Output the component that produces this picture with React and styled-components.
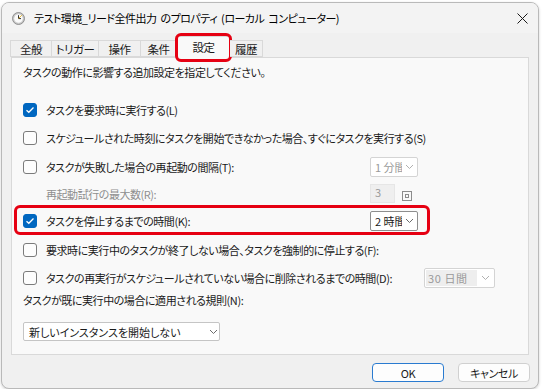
import React from "react";
import styled, { createGlobalStyle } from "styled-components";

const Global = createGlobalStyle`
  html, body {
    margin: 0;
    background: #ffffff;
  }
  body {
    font-family: "Noto Sans CJK JP", "Noto Sans", sans-serif;
    font-size: 11px;
    font-feature-settings: "palt";
    letter-spacing: -0.45px;
    color: #1a1a1a;
  }
`;

const Window = styled.div`
  box-sizing: border-box;
  width: 538px;
  height: 387px;
  margin: 2px 0 0 1px;
  border: 1px solid #b9b9b9;
  border-radius: 8px;
  background: #f0f0f0;
  box-shadow: 0 1px 3px rgba(0, 0, 0, 0.18);
  display: flex;
  flex-direction: column;
  overflow: hidden;
`;

const TitleBar = styled.div`
  height: 30px;
  flex-shrink: 0;
  display: flex;
  align-items: center;
  padding: 0 0 0 10px;
  background: #f3f3f3;
`;

const TitleText = styled.span`
  margin-left: 9px;
  flex: 1;
  font-size: 11px;
  letter-spacing: -0.5px;
  word-spacing: 2px;
  color: #000;
`;

const CloseButton = styled.div`
  width: 20px;
  display: flex;
  justify-content: center;
  margin-right: 6px;
`;

const TabStrip = styled.div`
  display: flex;
  align-items: flex-end;
  height: 24px;
  padding-left: 8px;
  position: relative;
  z-index: 1;
`;

const Tab = styled.div`
  position: relative;
  box-sizing: border-box;
  width: ${(p) => p.$w}px;
  height: ${(p) => (p.$active ? 22 : 17)}px;
  margin-bottom: ${(p) => (p.$active ? -1 : 0)}px;
  margin-left: ${(p) => (p.$active ? -2 : 0)}px;
  margin-right: ${(p) => (p.$active ? -2 : 0)}px;
  border: 1px solid #d9d9d9;
  border-bottom: ${(p) => (p.$active ? "none" : "1px solid #d9d9d9")};
  border-left: ${(p) => (p.$first || p.$active ? "1px solid #d9d9d9" : "none")};
  background: ${(p) => (p.$active ? "#f9f9f9" : "#f0f0f0")};
  display: flex;
  align-items: ${(p) => (p.$active ? "flex-start" : "center")};
  padding-top: ${(p) => (p.$active ? 3 : 0)}px;
  justify-content: center;
  font-size: 11.5px;
  color: #1a1a1a;
  line-height: 14px;
`;

const Mark = styled.div`
  position: absolute;
  left: -1px;
  top: -4px;
  right: -1px;
  bottom: -4px;
  border: 3px solid #e60012;
  border-radius: 6px;
  pointer-events: none;
`;

const Panel = styled.div`
  box-sizing: border-box;
  height: 298px;
  margin: 0 9px 0 9px;
  border: 1px solid #d9d9d9;
  background: #f9f9f9;
  padding: 6px 0 0 11px;
  display: flex;
  flex-direction: column;
`;

const Line = styled.div`
  line-height: 16px;
  margin-top: ${(p) => p.$mt || 0}px;
`;

const Row = styled.div`
  position: relative;
  display: flex;
  align-items: center;
  height: ${(p) => p.$h}px;
  padding-right: ${(p) => p.$pr || 0}px;
  margin-top: ${(p) => p.$mt || 0}px;
`;

const Label = styled.span`
  flex: 1;
  margin-left: ${(p) => (p.$indent ? 23 : 9)}px;
  color: ${(p) => (p.$muted ? "#8f8f8f" : "#1a1a1a")};
  white-space: nowrap;
`;

const Box = styled.span`
  box-sizing: border-box;
  width: 14px;
  height: 14px;
  border-radius: 3px;
  flex-shrink: 0;
  border: 1px solid ${(p) => (p.$on ? "#0067c0" : "#7b7b7b")};
  background: ${(p) => (p.$on ? "#0067c0" : "#fdfdfd")};
  display: flex;
  align-items: center;
  justify-content: center;
`;

const Slot = styled.div`
  display: flex;
  align-items: center;
  gap: 7px;
  width: ${(p) => p.$w}px;
  flex-shrink: 0;
`;

const Select = styled.div`
  box-sizing: border-box;
  width: ${(p) => p.$w}px;
  height: ${(p) => p.$h || 20}px;
  border: 1px solid ${(p) => (p.$disabled ? "#d4d4d4" : p.$strong ? "#8d8d8d" : "#c5c5c5")};
  border-radius: 2px;
  background: #ffffff;
  display: flex;
  align-items: center;
  padding: 1px 0 1px ${(p) => p.$pl || 2}px;
  color: ${(p) => (p.$disabled ? "#9a9a9a" : "#1a1a1a")};
`;

const SelectValue = styled.span`
  width: ${(p) => p.$w}px;
  height: 100%;
  overflow: hidden;
  white-space: nowrap;
  display: flex;
  align-items: center;
  padding-left: 2px;
  box-sizing: border-box;
  background: ${(p) => (p.$shade ? "#eeeeee" : "transparent")};
  letter-spacing: ${(p) => (p.$shade ? "0.6px" : "0")};
`;

const Chevron = styled.span`
  flex: 1;
  display: flex;
  justify-content: center;
`;

const Spin = styled.div`
  box-sizing: border-box;
  width: 25px;
  height: 19px;
  background: #efefef;
  border: 1px solid #e6e6e6;
  color: #9a9a9a;
  padding-left: 4px;
  display: flex;
  align-items: flex-start;
  line-height: 14px;
`;

const SpinKnob = styled.span`
  box-sizing: border-box;
  width: 10px;
  height: 10px;
  margin-top: 4px;
  border: 1px solid #8c8c8c;
  display: flex;
  align-items: center;
  justify-content: center;
  &::after {
    content: "";
    width: 4px;
    height: 4px;
    border: 1px solid #8c8c8c;
    box-sizing: border-box;
  }
`;

const RowMark = styled.div`
  position: absolute;
  left: -9px;
  top: -1px;
  width: 416px;
  height: 30px;
  box-sizing: border-box;
  border: 3px solid #e60012;
  border-radius: 6px;
  pointer-events: none;
`;

const Footer = styled.div`
  display: flex;
  justify-content: flex-end;
  gap: 14px;
  padding: 8px 8px 0 0;
`;

const Button = styled.div`
  box-sizing: border-box;
  width: 72px;
  height: 19px;
  border-radius: 4px;
  border: ${(p) => (p.$primary ? "1.5px solid #2a7bd0" : "1px solid #d0d0d0")};
  background: #fdfdfd;
  display: flex;
  align-items: center;
  justify-content: center;
  color: #1a1a1a;
`;

const ChevronIcon = ({ color = "#6b6b6b" }) => (
  <svg width="9" height="6" viewBox="0 0 9 6">
    <path d="M1 1 L4.5 4.5 L8 1" fill="none" stroke={color} strokeWidth="1" />
  </svg>
);

const Check = () => (
  <svg width="10" height="8" viewBox="0 0 10 8">
    <path d="M1.5 4.2 L3.8 6.3 L8.5 1.5" fill="none" stroke="#fff" strokeWidth="1.3" />
  </svg>
);

const ClockIcon = () => (
  <svg width="13" height="13" viewBox="0 0 13 13">
    <circle cx="6.5" cy="6.5" r="6" fill="#c9c9c9" stroke="#7d7d7d" strokeWidth="0.8" />
    <circle cx="6.5" cy="6.5" r="4.3" fill="#fbfbfb" />
    <path d="M6.5 3.2 V6.6 H9" fill="none" stroke="#333" strokeWidth="1" />
    <path d="M6.5 6.5 L9.8 3.2" stroke="#e0a800" strokeWidth="0.8" />
  </svg>
);

const CloseIcon = () => (
  <svg width="11" height="11" viewBox="0 0 11 11">
    <path d="M0.5 0.5 L10.5 10.5 M10.5 0.5 L0.5 10.5" stroke="#1a1a1a" strokeWidth="1" />
  </svg>
);

const tabs = [
  { t: "全般", w: 42 },
  { t: "トリガー", w: 47 },
  { t: "操作", w: 42 },
  { t: "条件", w: 36 },
  { t: "設定", w: 57, active: true },
  { t: "履歴", w: 33 },
];

const CheckRow = ({ on, children, ...rest }) => (
  <Row {...rest}>
    <Box $on={on}>{on && <Check />}</Box>
    {children}
  </Row>
);

export default function App() {
  return (
    <>
      <Global />
      <Window>
        <TitleBar>
          <ClockIcon />
          <TitleText>テスト環境_リード全件出力 のプロパティ (ローカル コンピューター)</TitleText>
          <CloseButton>
            <CloseIcon />
          </CloseButton>
        </TitleBar>

        <TabStrip>
          {tabs.map((tab, i) => (
            <Tab key={tab.t} $w={tab.w} $active={tab.active} $first={i === 0}>
              {tab.t}
              {tab.active && <Mark />}
            </Tab>
          ))}
        </TabStrip>

        <Panel>
          <Line>タスクの動作に影響する追加設定を指定してください。</Line>

          <CheckRow on $h={28} $mt={16}>
            <Label>タスクを要求時に実行する(L)</Label>
          </CheckRow>
          <CheckRow $h={28}>
            <Label>スケジュールされた時刻にタスクを開始できなかった場合、すぐにタスクを実行する(S)</Label>
          </CheckRow>
          <CheckRow $h={29} $pr={110}>
            <Label>タスクが失敗した場合の再起動の間隔(T):</Label>
            <Slot $w={48}>
              <Select $w={48} $disabled>
                <SelectValue $w={29}>1 分間</SelectValue>
                <Chevron>
                  <ChevronIcon color="#b0b0b0" />
                </Chevron>
              </Select>
            </Slot>
          </CheckRow>
          <Row $h={25} $pr={110}>
            <Label $indent $muted>
              再起動試行の最大数(R):
            </Label>
            <Slot $w={48}>
              <Spin>3</Spin>
              <SpinKnob />
            </Slot>
          </Row>
          <CheckRow on $h={29} $pr={110}>
            <Label>タスクを停止するまでの時間(K):</Label>
            <Slot $w={48}>
              <Select $w={48} $strong>
                <SelectValue $w={29}>2 時間</SelectValue>
                <Chevron>
                  <ChevronIcon />
                </Chevron>
              </Select>
            </Slot>
            <RowMark />
          </CheckRow>
          <CheckRow $h={29}>
            <Label>要求時に実行中のタスクが終了しない場合、タスクを強制的に停止する(F):</Label>
          </CheckRow>
          <CheckRow $h={28} $pr={33}>
            <Label>タスクの再実行がスケジュールされていない場合に削除されるまでの時間(D):</Label>
            <Slot $w={71}>
              <Select $w={71} $disabled $pl={1}>
                <SelectValue $w={51} $shade>
                  30 日間
                </SelectValue>
                <Chevron>
                  <ChevronIcon color="#b0b0b0" />
                </Chevron>
              </Select>
            </Slot>
          </CheckRow>

          <Line>タスクが既に実行中の場合に適用される規則(N):</Line>

          <Row $h={19} $mt={14}>
            <Select $w={197} $h={19} $pl={3}>
              <SelectValue $w={180}>新しいインスタンスを開始しない</SelectValue>
              <Chevron>
                <ChevronIcon />
              </Chevron>
            </Select>
          </Row>
        </Panel>

        <Footer>
          <Button $primary>OK</Button>
          <Button>キャンセル</Button>
        </Footer>
      </Window>
    </>
  );
}
